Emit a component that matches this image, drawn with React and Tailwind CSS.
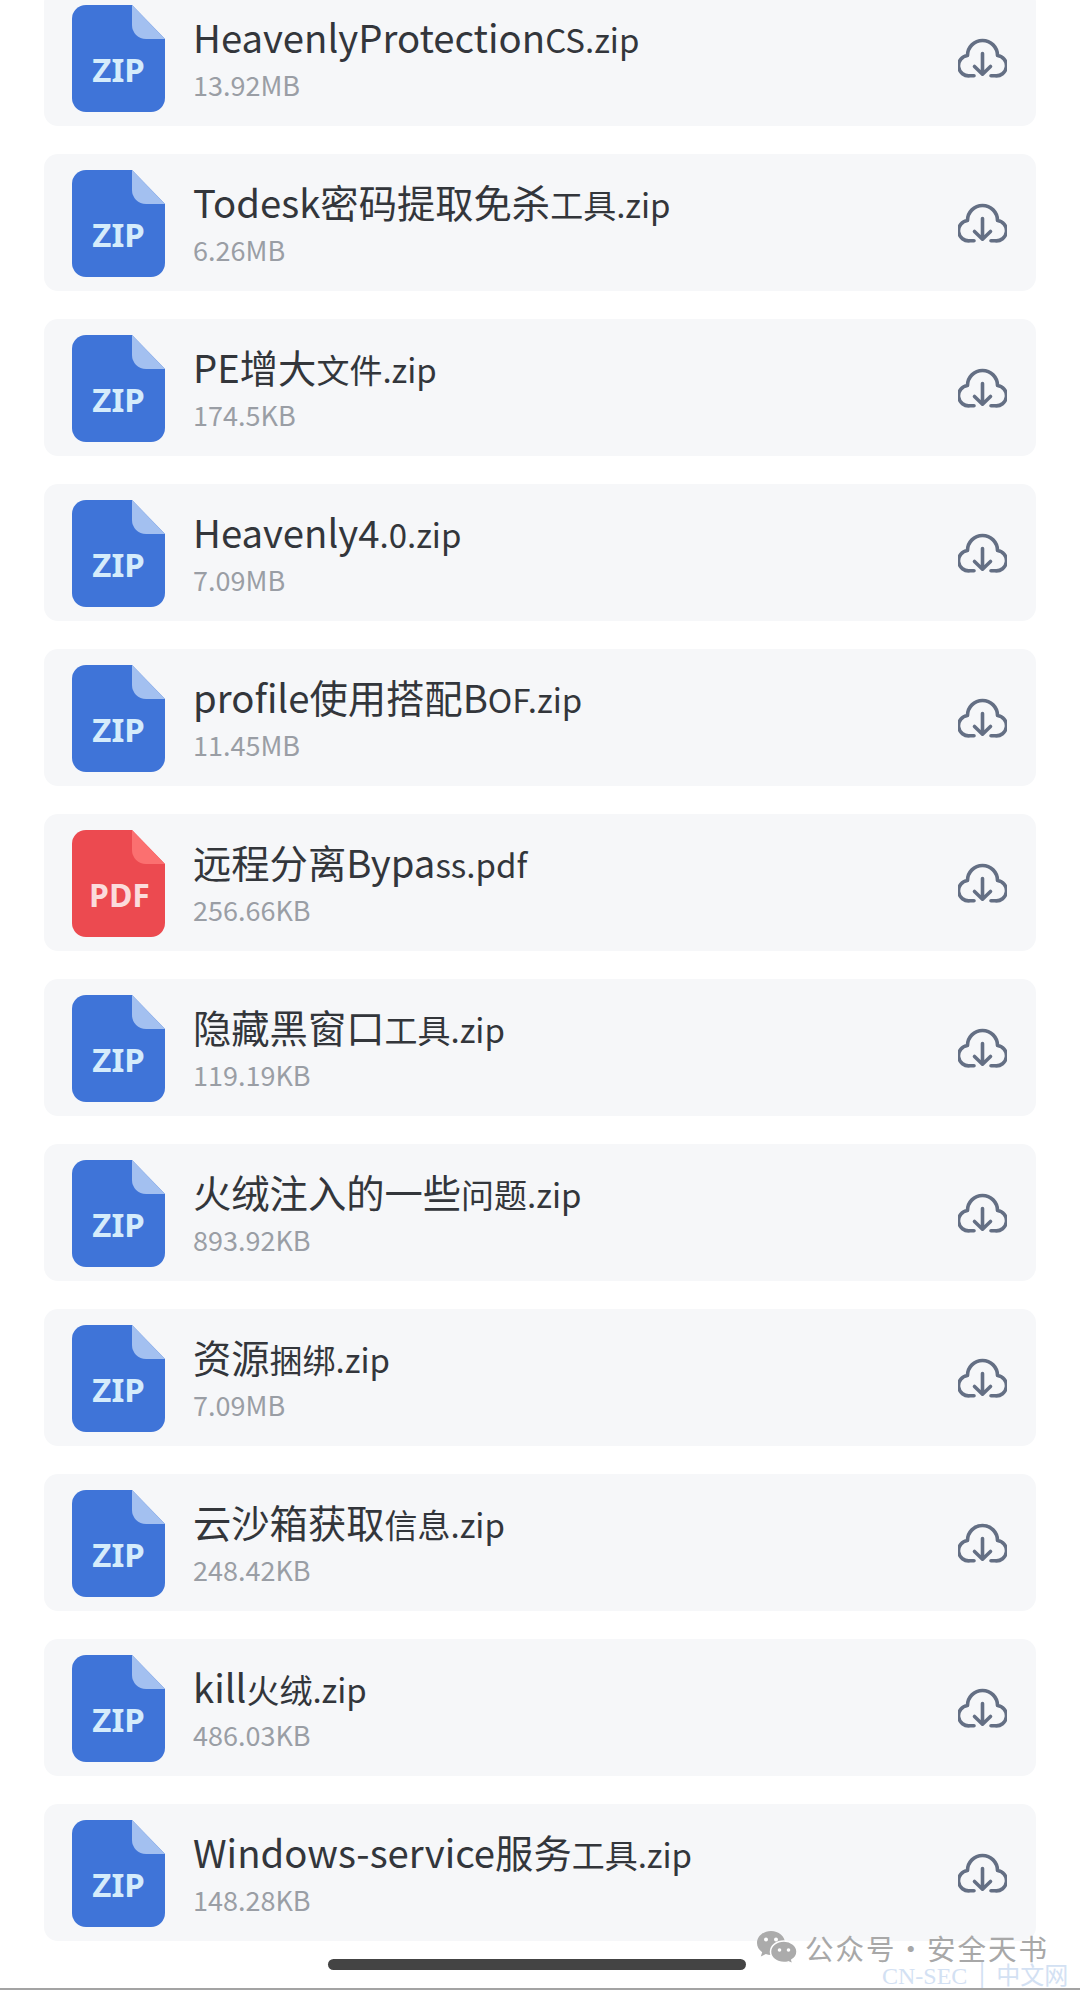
const files = [
  { big: 'HeavenlyProtection', small: 'CS.zip', size: '13.92MB' },
  { big: 'Todesk密码提取免杀', small: '工具.zip', size: '6.26MB' },
  { big: 'PE增大', small: '文件.zip', size: '174.5KB' },
  { big: 'Heavenly4', small: '.0.zip', size: '7.09MB' },
  { big: 'profile使用搭配B', small: 'OF.zip', size: '11.45MB' },
  { big: '远程分离Bypa', small: 'ss.pdf', size: '256.66KB', pdf: true },
  { big: '隐藏黑窗口', small: '工具.zip', size: '119.19KB' },
  { big: '火绒注入的一些', small: '问题.zip', size: '893.92KB' },
  { big: '资源', small: '捆绑.zip', size: '7.09MB' },
  { big: '云沙箱获取', small: '信息.zip', size: '248.42KB' },
  { big: 'kill', small: '火绒.zip', size: '486.03KB' },
  { big: 'Windows-service服务', small: '工具.zip', size: '148.28KB' },
];

const FileIcon = ({ pdf }) => (
  <svg width="93" height="107" viewBox="0 0 93 107" className="shrink-0 mt-[2px]">
    <path
      d="M14 0H60L93 34V93A14 14 0 0 1 79 107H14A14 14 0 0 1 0 93V14A14 14 0 0 1 14 0Z"
      fill={pdf ? '#ec4a50' : '#3f74d8'}
    />
    <path d="M60 0L93 34H74A14 14 0 0 1 60 20Z" fill={pdf ? '#fb7070' : '#a3c0f0'} />
    <text
      x={pdf ? 47.5 : 46.5}
      y="77"
      textAnchor="middle"
      fontFamily="'Noto Sans', sans-serif"
      fontWeight="700"
      fontSize={pdf ? 32 : 33}
      fill={pdf ? '#fbdcdc' : '#d5ecfb'}
    >
      {pdf ? 'PDF' : 'ZIP'}
    </text>
  </svg>
);

const DownloadIcon = () => (
  <svg width="49" height="40" viewBox="0 0 49 40" fill="none" stroke="#646f84" strokeWidth="3.6" strokeLinecap="round" strokeLinejoin="round" className="shrink-0">
    <path d="M16 37.8H12A10.2 10.2 0 0 1 9.500 17.500A15 15 0 0 1 39.500 17.500A10.2 10.2 0 0 1 37 37.800H33" />
    <path d="M24.500 15.500V36M16.500 28.500L24.500 36.200L32.500 28.500" />
  </svg>
);

const WechatIcon = () => (
  <svg width="40" height="33" viewBox="0 0 40 33" className="shrink-0">
    <path d="M14 0C6.3 0 0 5.4 0 12C0 15.8 2 19 5.200 21.200L3.800 25.500L8.800 23C10.400 23.600 12.200 24 14 24C21.700 24 28 18.600 28 12C28 5.400 21.700 0 14 0Z" fill="#ababab" />
    <path d="M27 10C19.500 10 13.500 14.800 13.500 20.800C13.500 26.800 19.500 31.500 27 31.500C28.500 31.500 30 31.300 31.300 30.900L36 33L34.800 29C38 27 40 24 40 20.800C40 14.800 34 10 27 10Z" fill="#ababab" stroke="#ffffff" strokeWidth="1.500" />
    <circle cx="9" cy="8.500" r="2" fill="#ffffff" />
    <circle cx="19" cy="8.500" r="2" fill="#ffffff" />
    <circle cx="22.500" cy="19" r="1.800" fill="#ffffff" />
    <circle cx="31.500" cy="19" r="1.800" fill="#ffffff" />
  </svg>
);

const FileRow = ({ file }) => (
  <div className="flex items-center h-[137px] rounded-[14px] bg-[#f6f7f9] pl-[28px] pr-[29px]">
    <FileIcon pdf={file.pdf} />
    <div className="flex-1 min-w-0 ml-[28px]">
      <div className="h-[48px] leading-[48px] whitespace-nowrap text-[38.3px] text-[#33363b]">
        {file.big}
        <span className="text-[33px]">{file.small}</span>
      </div>
      <div className="h-[34px] leading-[34px] mt-[7px] text-[27px] text-[#9a9ea5]">{file.size}</div>
    </div>
    <DownloadIcon />
  </div>
);

export default function App() {
  return (
    <div className="relative flex flex-col h-[1990px] w-[1080px] overflow-hidden bg-white font-['Noto_Sans_CJK_SC',sans-serif]">
      <div className="flex flex-col gap-[28px] -mt-[11px] ml-[44px] mr-[44px]">
        {files.map((file) => (
          <FileRow key={file.big + file.size} file={file} />
        ))}
      </div>
      <div className="mt-[18px] ml-[328px] w-[418px] h-[11px] rounded-full bg-[#444444]" />

      <div className="absolute left-[757px] top-[1931px] flex items-center gap-[8px]">
        <WechatIcon />
        <span className="text-[28.5px] leading-[30px] tracking-[2px] whitespace-nowrap text-[#a8a8a8]">公众号·安全天书</span>
      </div>
      <div className="absolute left-[882px] top-[1964px] text-[24px] leading-[24px] whitespace-nowrap text-[#d3e1f3] font-['Liberation_Serif','Noto_Sans_CJK_SC',serif]">
        CN-SEC │ 中文网
      </div>
      <div className="absolute bottom-0 left-0 right-0 h-[2px] bg-[#a3a3a3]" />
    </div>
  );
}
